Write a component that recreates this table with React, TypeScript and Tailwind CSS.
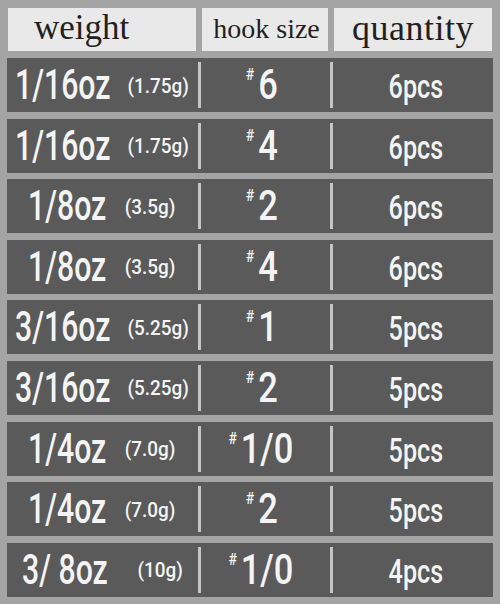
import React from "react";

type Row = { frac: string; w: string; g: string; gap: string; hook: string; qty: string };

const rows: Row[] = [
  { frac: "1/16oz", w: "w-[96px]", g: "(1.75g)", gap: "ml-[13px]", hook: "6", qty: "6" },
  { frac: "1/16oz", w: "w-[96px]", g: "(1.75g)", gap: "ml-[13px]", hook: "4", qty: "6" },
  { frac: "1/8oz", w: "w-[81px]", g: "(3.5g)", gap: "ml-[13px]", hook: "2", qty: "6" },
  { frac: "1/8oz", w: "w-[81px]", g: "(3.5g)", gap: "ml-[13px]", hook: "4", qty: "6" },
  { frac: "3/16oz", w: "w-[96px]", g: "(5.25g)", gap: "ml-[13px]", hook: "1", qty: "5" },
  { frac: "3/16oz", w: "w-[96px]", g: "(5.25g)", gap: "ml-[13px]", hook: "2", qty: "5" },
  { frac: "1/4oz", w: "w-[81px]", g: "(7.0g)", gap: "ml-[13px]", hook: "1/0", qty: "5" },
  { frac: "1/4oz", w: "w-[81px]", g: "(7.0g)", gap: "ml-[13px]", hook: "2", qty: "5" },
  { frac: "3/ 8oz", w: "w-[89px]", g: "(10g)", gap: "ml-[24px]", hook: "1/0", qty: "4" },
];

const sans = "font-['Roboto','DejaVu_Sans',sans-serif] font-medium";

export default function App() {
  return (
    <div className="w-[500px] h-[604px] bg-[#a4a4a4] pt-[8px] px-[7px] overflow-hidden">
      <div className="grid grid-cols-[188px_126px_158px] gap-x-[6px] pl-[1px] h-[43px] font-['Liberation_Serif','DejaVu_Serif',serif] text-[#231f20]">
        <div className="bg-[#e9e9e9] flex items-center pl-[26px] text-[35px] leading-none pb-[4px]">weight</div>
        <div className="bg-[#e9e9e9] flex items-center justify-center text-[28px] leading-none pb-[2px] pl-[3px]">hook size</div>
        <div className="bg-[#e9e9e9] flex items-center justify-center text-[36px] leading-none tracking-[0.5px] pb-[4px]">quantity</div>
      </div>
      <div className="flex flex-col gap-[6.6px] mt-[7px]">
        {rows.map((r, i) => (
          <div
            key={i}
            className={`bg-[#5a5a5a] h-[54px] grid grid-cols-[191px_3px_129px_3px_159px] text-[#f4f4f4] ${sans}`}
          >
            <div className="flex items-center justify-center whitespace-pre pl-[2px]">
              <span className={`inline-block ${r.w} h-[42px] overflow-visible`}>
                <span className="inline-block origin-left scale-x-[0.72] text-[42px] leading-[42px]">{r.frac}</span>
              </span>
              <span className={`inline-block scale-x-[0.9] text-[21px] leading-none ${r.gap} translate-y-[1px]`}>{r.g}</span>
            </div>
            <div className="bg-[#c5c5c5] my-[4px]" />
            <div className="flex items-center justify-center pl-[4px]">
              <span className="relative inline-block scale-x-[0.82] text-[42px] leading-none whitespace-nowrap">
                <span className="absolute -left-[15px] top-[2px] text-[17px] leading-none">#</span>
                {r.hook}
              </span>
            </div>
            <div className="bg-[#c5c5c5] my-[4px]" />
            <div className="flex items-center justify-center pl-[7px]">
              <span className="inline-block scale-x-[0.74] text-[34px] leading-none whitespace-nowrap translate-y-[1px]">
                {r.qty}pcs
              </span>
            </div>
          </div>
        ))}
      </div>
    </div>
  );
}
